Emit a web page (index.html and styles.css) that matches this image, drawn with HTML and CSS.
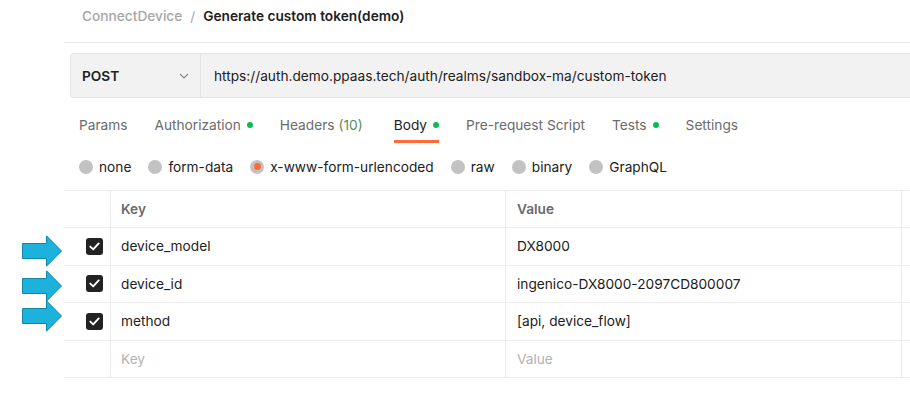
FILE: index.html
```html
<!DOCTYPE html>
<html>
<head>
<meta charset="utf-8">
<link rel="stylesheet" href="styles.css">
</head>
<body>
<div class="page">
  <div class="crumbs">
    <span class="crumb-parent">ConnectDevice</span>
    <span class="crumb-sep">/</span>
    <span class="crumb-current">Generate custom token(demo)</span>
  </div>

  <div class="urlbar">
    <div class="method">
      <span class="method-name">POST</span>
      <svg class="chevron" width="10" height="6" viewBox="0 0 10 6"><path d="M1 1l4 4 4-4" fill="none" stroke="#8a8a8a" stroke-width="1.1"/></svg>
    </div>
    <div class="url">https://auth.demo.ppaas.tech/auth/realms/sandbox-ma/custom-token</div>
  </div>

  <div class="tabs">
    <div class="tab">Params</div>
    <div class="tab">Authorization<span class="dot"></span></div>
    <div class="tab">Headers<span class="count">(10)</span></div>
    <div class="tab active">Body<span class="dot"></span></div>
    <div class="tab">Pre-request Script</div>
    <div class="tab">Tests<span class="dot"></span></div>
    <div class="tab">Settings</div>
  </div>

  <div class="radios">
    <label class="radio"><span class="circle"></span>none</label>
    <label class="radio"><span class="circle"></span>form-data</label>
    <label class="radio"><span class="circle selected"></span>x-www-form-urlencoded</label>
    <label class="radio"><span class="circle"></span>raw</label>
    <label class="radio"><span class="circle"></span>binary</label>
    <label class="radio"><span class="circle"></span>GraphQL</label>
  </div>

  <div class="table">
    <div class="row head">
      <div class="gutter"></div>
      <div class="cell check"></div>
      <div class="cell key">Key</div>
      <div class="cell value">Value</div>
      <div class="cell rest"></div>
    </div>
    <div class="row">
      <div class="gutter"><svg class="arrow arrow-1" width="41" height="32" viewBox="0 0 41 32"><path d="M0.5 8.5H24.5V0.8L39.5 16 24.5 31.2V23.5H0.5Z" fill="#1cb2db" stroke="#0e87a9" stroke-width="1"/></svg></div>
      <div class="cell check"><span class="checkbox"><svg width="11" height="9" viewBox="0 0 11 9"><path d="M1.3 4.6l2.9 2.8 5.5-6" fill="none" stroke="#fff" stroke-width="1.9" stroke-linecap="round" stroke-linejoin="round"/></svg></span></div>
      <div class="cell key">device_model</div>
      <div class="cell value">DX8000</div>
      <div class="cell rest"></div>
    </div>
    <div class="row">
      <div class="gutter"><svg class="arrow arrow-2" width="41" height="32" viewBox="0 0 41 32"><path d="M0.5 8.5H24.5V0.8L39.5 16 24.5 31.2V23.5H0.5Z" fill="#1cb2db" stroke="#0e87a9" stroke-width="1"/></svg></div>
      <div class="cell check"><span class="checkbox"><svg width="11" height="9" viewBox="0 0 11 9"><path d="M1.3 4.6l2.9 2.8 5.5-6" fill="none" stroke="#fff" stroke-width="1.9" stroke-linecap="round" stroke-linejoin="round"/></svg></span></div>
      <div class="cell key">device_id</div>
      <div class="cell value">ingenico-DX8000-2097CD800007</div>
      <div class="cell rest"></div>
    </div>
    <div class="row">
      <div class="gutter"><svg class="arrow arrow-3" width="41" height="32" viewBox="0 0 41 32"><path d="M0.5 8.5H24.5V0.8L39.5 16 24.5 31.2V23.5H0.5Z" fill="#1cb2db" stroke="#0e87a9" stroke-width="1"/></svg></div>
      <div class="cell check"><span class="checkbox"><svg width="11" height="9" viewBox="0 0 11 9"><path d="M1.3 4.6l2.9 2.8 5.5-6" fill="none" stroke="#fff" stroke-width="1.9" stroke-linecap="round" stroke-linejoin="round"/></svg></span></div>
      <div class="cell key">method</div>
      <div class="cell value">[api, device_flow]</div>
      <div class="cell rest"></div>
    </div>
    <div class="row">
      <div class="gutter"></div>
      <div class="cell check"></div>
      <div class="cell key placeholder">Key</div>
      <div class="cell value placeholder">Value</div>
      <div class="cell rest"></div>
    </div>
  </div>
</div>
</body>
</html>
```

FILE: styles.css
```css
html, body {
  margin: 0;
  padding: 0;
  background: #fff;
  overflow: hidden;
}

body {
  font-family: Inter, "Noto Sans", "Liberation Sans", sans-serif;
  font-size: 13.7px;
  color: #212121;
}

.page {
  width: 910px;
  overflow: hidden;
  display: flex;
  flex-direction: column;
}

.crumbs {
  margin-left: 64px;
  height: 43px;
  box-sizing: border-box;
  padding: 8px 0 0 18px;
  border-bottom: 1px solid #e8e8e8;
  display: flex;
  align-items: flex-start;
  gap: 8px;
  line-height: 16px;
}

.crumb-parent { color: #a6a6a6; font-weight: 500; }
.crumb-sep { color: #a6a6a6; }
.crumb-current { color: #212121; font-weight: 600; }

.urlbar {
  margin: 10px 0 0 70px;
  height: 45px;
  box-sizing: border-box;
  background: #f2f2f2;
  border: 1px solid #e6e6e6;
  border-right: none;
  border-radius: 4px 0 0 4px;
  display: flex;
  align-items: stretch;
}

.method {
  width: 130px;
  box-sizing: border-box;
  padding: 0 11px 0 11px;
  border-right: 1px solid #e4e4e4;
  display: flex;
  align-items: center;
  justify-content: space-between;
}

.method-name { font-weight: 600; color: #212121; }

.url {
  padding-left: 13px;
  display: flex;
  align-items: center;
  color: #212121;
  white-space: nowrap;
}

.tabs {
  margin: 0 0 0 79px;
  height: 45px;
  display: flex;
  align-items: stretch;
}

.tab {
  display: flex;
  align-items: center;
  color: #6b6b6b;
  margin-right: 27px;
  box-sizing: border-box;
  border-bottom: 3px solid transparent;
  padding-top: 12px;
  white-space: nowrap;
}

.tab.active {
  color: #212121;
  border-bottom-color: #ff6c37;
}

.count { color: #5f8c55; margin-left: 4px; margin-right: 4px; }

.dot {
  width: 6px;
  height: 6px;
  border-radius: 50%;
  background: #0cbb52;
  margin-left: 6px;
}

.radios {
  margin: 0 0 0 79px;
  height: 47px;
  display: flex;
  align-items: center;
  gap: 17px;
}

.radio {
  display: flex;
  align-items: center;
  gap: 6px;
  color: #212121;
}

.circle {
  width: 14px;
  height: 14px;
  border-radius: 50%;
  background: #c2c2c2;
  display: flex;
  align-items: center;
  justify-content: center;
}

.circle.selected::after {
  content: "";
  width: 7px;
  height: 7px;
  border-radius: 50%;
  background: #ff6c37;
}

.table {
  display: flex;
  flex-direction: column;
}

.row {
  display: grid;
  grid-template-columns: 64px 47px 395px 396px 1fr;
  grid-template-rows: 37.5px;
  height: 37.5px;
}

.row.head {
  grid-template-rows: 38px;
  height: 38px;
}

.gutter {
  display: flex;
  align-items: center;
  padding-left: 22px;
}

.arrow-1 { margin-top: 8px; }
.arrow-2 { margin-top: 3px; }
.arrow-3 { margin-bottom: 12px; }

.cell {
  box-sizing: border-box;
  border-bottom: 1px solid #ececec;
  border-right: 1px solid #ececec;
  display: flex;
  align-items: center;
  padding-left: 10px;
  white-space: nowrap;
}

.row.head .cell { border-top: 1px solid #ececec; font-weight: 600; color: #6b6b6b; }

.cell.check { padding-left: 22px; }

.cell.value { padding-left: 11px; }

.placeholder { color: #b3b3b3; }

.checkbox {
  width: 17px;
  height: 17px;
  border-radius: 3px;
  background: #222;
  display: flex;
  align-items: center;
  justify-content: center;
}
```
